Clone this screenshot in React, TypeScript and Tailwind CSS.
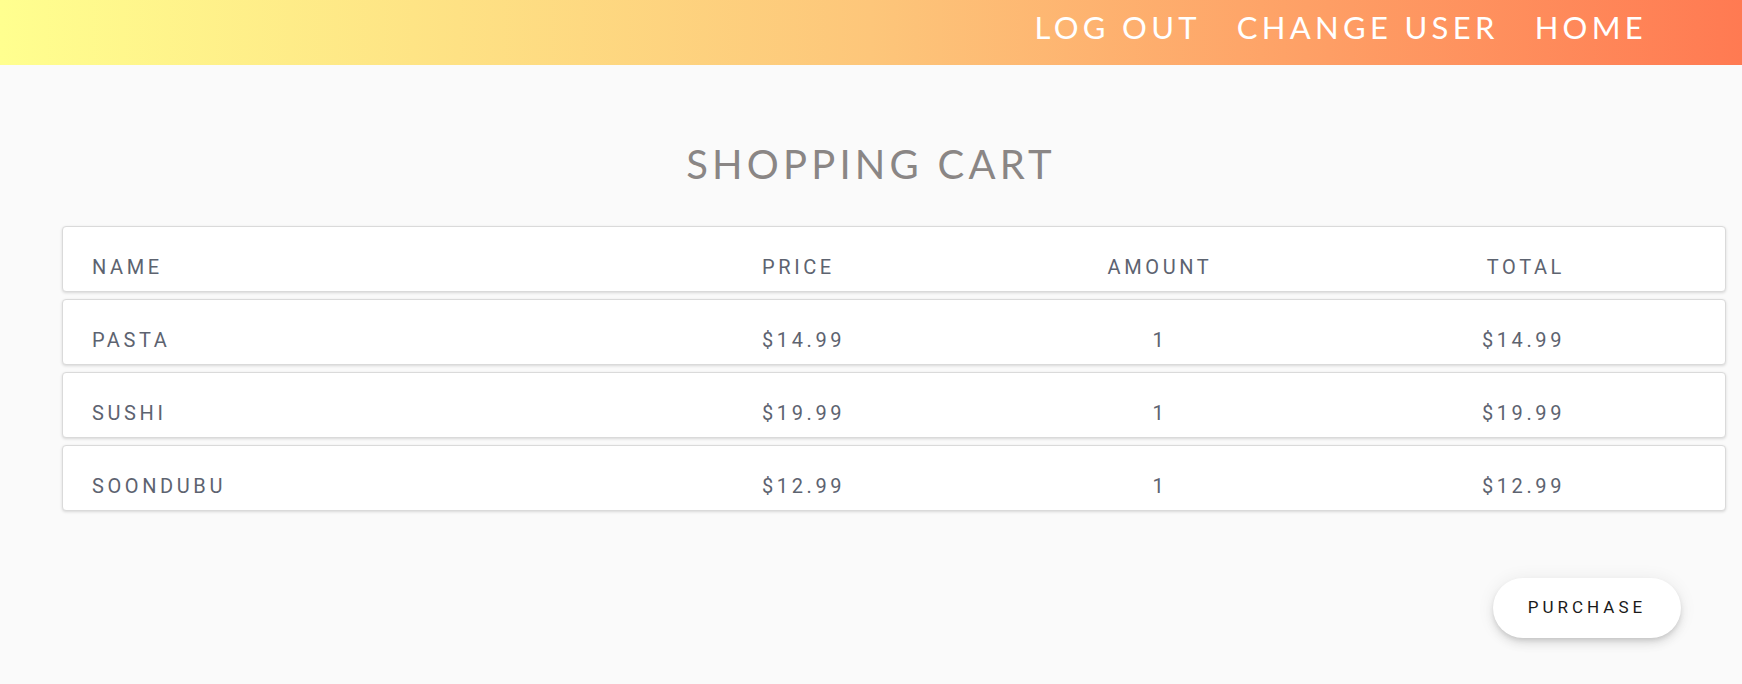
import React from "react";

const items = [
  { name: "PASTA", price: "$14.99", amount: 1, total: "$14.99" },
  { name: "SUSHI", price: "$19.99", amount: 1, total: "$19.99" },
  { name: "SOONDUBU", price: "$12.99", amount: 1, total: "$12.99" },
];

function Row({
  cells,
}: {
  cells: [string, string, string | number, string];
}) {
  return (
    <div className="h-[66px] bg-white border border-[#dadada] rounded-[4px] shadow-[0_1px_3px_rgba(0,0,0,0.14)] pt-[29px] pl-[29px] pr-[160px]">
      <div className="grid grid-cols-[670px_248px_300px_1fr] text-[20px] leading-[23px] tracking-[3.6px] text-[#5d6370] font-['Roboto',sans-serif]">
        <div>{cells[0]}</div>
        <div>{cells[1]}</div>
        <div className="text-center">{cells[2]}</div>
        <div className="text-right">{cells[3]}</div>
      </div>
    </div>
  );
}

export default function App() {
  const nav_style =
    "text-white text-[31px] leading-none tracking-[4.3px] font-['Lato',sans-serif] cursor-pointer";

  return (
    <div className="min-h-screen bg-[#fafafa]">
      <header className="h-[65px] bg-linear-to-r/srgb from-[#ffff8f] via-[#fdc67a] to-[#ff7a52] flex items-center justify-end gap-[36px] pr-[95px] pb-[10px]">
        <a className={nav_style}>LOG OUT</a>
        <a className={nav_style}>CHANGE USER</a>
        <a className={nav_style}>HOME</a>
      </header>

      <h1 className="mt-[79px] text-center text-[40px] leading-[40px] tracking-[0.105em] text-[#8a8685] font-['Lato',sans-serif]">
        SHOPPING CART
      </h1>

      <div className="mt-[42px] ml-[62px] mr-[16px] flex flex-col gap-[7px]">
        <Row cells={["NAME", "PRICE", "AMOUNT", "TOTAL"]} />
        {items.map((item) => (
          <Row
            key={item.name}
            cells={[item.name, item.price, item.amount, item.total]}
          />
        ))}
      </div>

      <div className="flex justify-end mt-[67px] mr-[61px]">
        <button className="h-[60px] w-[188px] rounded-full bg-white text-[17px] tracking-[4px] text-[#1a1a1a] font-['Roboto',sans-serif] shadow-[0_3px_5px_-1px_rgba(0,0,0,0.12),0_6px_10px_0_rgba(0,0,0,0.08),0_1px_18px_0_rgba(0,0,0,0.07)]">
          PURCHASE
        </button>
      </div>
    </div>
  );
}
